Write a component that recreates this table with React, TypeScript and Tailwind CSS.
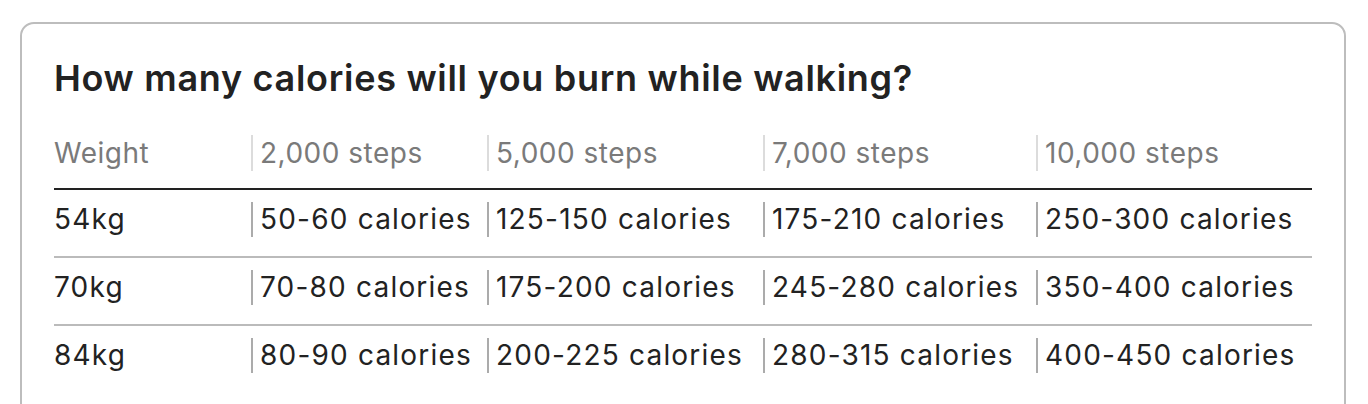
const HEADERS = ['Weight', '2,000 steps', '5,000 steps', '7,000 steps', '10,000 steps'];

const ROWS = [
  ['54kg', '50-60 calories', '125-150 calories', '175-210 calories', '250-300 calories'],
  ['70kg', '70-80 calories', '175-200 calories', '245-280 calories', '350-400 calories'],
  ['84kg', '80-90 calories', '200-225 calories', '280-315 calories', '400-450 calories'],
];

const GRID = 'grid grid-cols-[197px_236px_276px_273px_277px]';

export default function App() {
  return (
    <div className="bg-white w-[1368px] h-[404px] overflow-hidden pt-[22px] pl-[20px]" style={{ fontFamily: 'Inter, "Liberation Sans", Arial, sans-serif' }}>
      <div className="w-[1326px] h-[420px] rounded-[14px] border-2 border-[#bdbdbd] px-[32px] pt-[34px]">
        <h2 className="text-[36px] leading-[40px] font-semibold text-[#222] tracking-[0.7px]">
          How many calories will you burn while walking?
        </h2>

        <div className="mt-[37px]">
          {/* Header */}
          <div className={`${GRID} border-b-2 border-[#222] pb-[17px]`}>
            {HEADERS.map((h, i) => (
              <div
                key={h}
                className={`text-[28px] leading-[36px] text-[#7a7a7a] whitespace-nowrap tracking-[0.5px] ${i > 0 ? 'border-l-2 border-[#dcdcdc] pl-[7px]' : ''}`}
              >
                {h}
              </div>
            ))}
          </div>

          {ROWS.map((row, r) => (
            <div
              key={row[0]}
              className={`${GRID} pt-[12px] pb-[19px] ${r < ROWS.length - 1 ? 'border-b-2 border-[#bbbbbb]' : ''}`}
            >
              {row.map((cell, i) => (
                <div
                  key={i}
                  className={`text-[28px] leading-[35px] text-[#222] whitespace-nowrap tracking-[1.2px] ${i > 0 ? 'border-l-2 border-[#ababab] pl-[7px]' : ''}`}
                >
                  {cell}
                </div>
              ))}
            </div>
          ))}
        </div>
      </div>
    </div>
  );
}
